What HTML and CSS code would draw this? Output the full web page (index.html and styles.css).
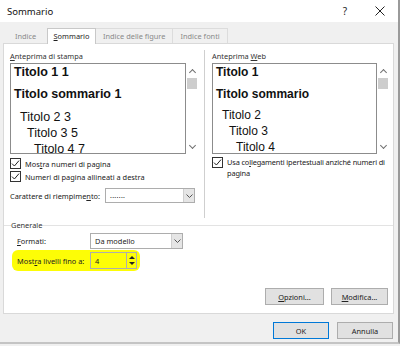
FILE: index.html
```html
<!DOCTYPE html>
<html lang="it">
<head>
    <meta charset="UTF-8">
    <title>Sommario</title>
    <link rel="stylesheet" href="styles.css">
</head>
<body>
    <div class="window">
        <div class="titlebar">
            <span class="title">Sommario</span>
            <span class="help">?</span>
            <span class="close">
                <svg width="10" height="10" viewBox="0 0 10 10"><path d="M0.5 0.5L9.5 9.5M9.5 0.5L0.5 9.5" stroke="#222" stroke-width="1"/></svg>
            </span>
        </div>

        <div class="tabs">
            <div class="tab">Indice</div>
            <div class="tab active"><u>S</u>ommario</div>
            <div class="tab">Indice delle figure</div>
            <div class="tab">Indice fonti</div>
        </div>

        <div class="panel">
            <div class="top">
                <div class="col col-left">
                    <div class="label"><u>A</u>nteprima di stampa</div>
                    <div class="preview">
                        <div class="list list-print">
                            <div class="h1">Titolo 1 1</div>
                            <div class="h1 gap">Titolo sommario 1</div>
                            <div class="h2">Titolo 2 3</div>
                            <div class="h3">Titolo 3 5</div>
                            <div class="h4">Titolo 4 7</div>
                        </div>
                        <div class="scrollbar">
                            <span class="arrow up"></span>
                            <span class="thumb"></span>
                            <span class="arrow down"></span>
                        </div>
                    </div>
                    <label class="check">
                        <span class="box"><svg width="9" height="9" viewBox="0 0 9 9"><path d="M1 4.6L3.4 7L8 1.6" fill="none" stroke="#222" stroke-width="1"/></svg></span>
                        <span>Mos<u>t</u>ra numeri di pagina</span>
                    </label>
                    <label class="check">
                        <span class="box"><svg width="9" height="9" viewBox="0 0 9 9"><path d="M1 4.6L3.4 7L8 1.6" fill="none" stroke="#222" stroke-width="1"/></svg></span>
                        <span>Numeri di pa<u>g</u>ina allineati a destra</span>
                    </label>
                    <div class="field-row fill-row">
                        <span class="field-label">Carattere di riempime<u>n</u>to:</span>
                        <div class="select select-fill">
                            <span class="value">.......</span>
                            <span class="drop"><svg width="7" height="4" viewBox="0 0 7 4"><path d="M0.5 0.5L3.5 3.5L6.5 0.5" fill="none" stroke="#555" stroke-width="1"/></svg></span>
                        </div>
                    </div>
                </div>

                <div class="vsep"></div>

                <div class="col col-right">
                    <div class="label">Anteprima <u>W</u>eb</div>
                    <div class="preview">
                        <div class="list list-web">
                            <div class="h1">Titolo 1</div>
                            <div class="h1 gap">Titolo sommario</div>
                            <div class="h2">Titolo 2</div>
                            <div class="h3">Titolo 3</div>
                            <div class="h4">Titolo 4</div>
                        </div>
                        <div class="scrollbar">
                            <span class="arrow up"></span>
                            <span class="thumb"></span>
                            <span class="arrow down"></span>
                        </div>
                    </div>
                    <label class="check check-wrap">
                        <span class="box"><svg width="9" height="9" viewBox="0 0 9 9"><path d="M1 4.6L3.4 7L8 1.6" fill="none" stroke="#222" stroke-width="1"/></svg></span>
                        <span>Usa co<u>l</u>legamenti ipertestuali anziché numeri di<br>pagina</span>
                    </label>
                </div>
            </div>

            <div class="group-title">
                <span>Generale</span>
                <span class="group-line"></span>
            </div>

            <div class="general">
                <div class="field-row">
                    <span class="field-label short"><u>F</u>ormati:</span>
                    <div class="select select-format">
                        <span class="value">Da modello</span>
                        <span class="drop"><svg width="7" height="4" viewBox="0 0 7 4"><path d="M0.5 0.5L3.5 3.5L6.5 0.5" fill="none" stroke="#555" stroke-width="1"/></svg></span>
                    </div>
                </div>
                <div class="highlight">
                    <span class="field-label short">Most<u>r</u>a livelli fino a:</span>
                    <div class="spin">
                        <span class="value">4</span>
                        <span class="spin-btns">
                            <span class="tri tri-up"></span>
                            <span class="tri tri-down"></span>
                        </span>
                    </div>
                </div>
            </div>

            <div class="panel-buttons">
                <button class="btn btn-opt"><u>O</u>pzioni...</button>
                <button class="btn btn-mod"><u>M</u>odifica...</button>
            </div>
        </div>

        <div class="footer">
            <button class="btn btn-ok">OK</button>
            <button class="btn btn-cancel">Annulla</button>
        </div>
    </div>
</body>
</html>
```

FILE: styles.css
```css
* {
    margin: 0;
    padding: 0;
    box-sizing: border-box;
}

body {
    width: 400px;
    height: 346px;
    overflow: hidden;
    background: #f0f0f0;
    font-family: "Noto Sans", "Liberation Sans", sans-serif;
    font-size: 7.4px;
    color: #1e1e1e;
}

u {
    text-decoration: underline;
    text-underline-offset: 1px;
}

.window {
    width: 400px;
    height: 344px;
    border-right: 2px solid #9a9a9a;
    border-bottom: 2px solid #c4c4c4;
}

/* title bar */
.titlebar {
    height: 22px;
    background: #fff;
    display: flex;
    align-items: center;
    padding-left: 7px;
}

.title {
    font-size: 9.5px;
    flex: 1;
    color: #111;
}

.help {
    width: 14px;
    text-align: center;
    font-size: 10px;
    margin-right: 21px;
}

.close {
    width: 14px;
    margin-right: 11px;
    display: flex;
    justify-content: center;
}

/* tabs */
.tabs {
    display: flex;
    align-items: flex-end;
    height: 21px;
    padding-left: 4px;
}

.tab {
    height: 15px;
    line-height: 14px;
    padding: 0 7px;
    color: #8a8a8a;
    border: 1px solid #dcdcdc;
    border-bottom: none;
    margin-right: -1px;
    background: #f0f0f0;
    white-space: nowrap;
}

.tab:first-child {
    width: 44px;
    border-left: none;
    border-top-color: transparent;
    text-align: center;
}

.tab.active {
    height: 16px;
    color: #1e1e1e;
    background: #fff;
    border-color: #c8c8c8;
    position: relative;
    margin-bottom: -1px;
    z-index: 1;
    width: 49px;
    text-align: center;
    padding: 0;
}

/* main panel */
.panel {
    margin-left: 3px;
    width: 391px;
    height: 271px;
    background: #fff;
    border: 1px solid #d9d9d9;
}

.top {
    display: flex;
    padding: 6px 0 0 6px;
    height: 182px;
    border-bottom: 1px solid #e3e3e3;
}

.col-left {
    width: 188px;
}

.col-right {
    width: 177px;
}

.vsep {
    width: 1px;
    height: 168px;
    background: #cfcfcf;
    margin: 0 7px 0 6px;
}

.label {
    height: 12px;
    line-height: 12px;
    color: #333;
}

.preview {
    display: flex;
    height: 91px;
    margin-top: 1px;
}

.list {
    flex: 1;
    border: 1px solid #8c8c8c;
    overflow: hidden;
    font-family: "Liberation Sans", Arial, sans-serif;
    color: #111;
    padding-left: 3px;
}

.list .h1 {
    font-weight: bold;
    line-height: 16px;
}

.list .gap {
    margin-top: 6px;
}

.list .h2 {
    padding-left: 6px;
    line-height: 16px;
}

.list .h3 {
    padding-left: 13px;
    line-height: 16px;
}

.list .h4 {
    padding-left: 20px;
    line-height: 16px;
}

.list-print {
    font-size: 12.5px;
}

.list-print .h2 {
    margin-top: 7px;
}

.list-web {
    font-size: 12px;
}

.list-web .h2 {
    margin-top: 5px;
}

.scrollbar {
    width: 12px;
    display: flex;
    flex-direction: column;
    align-items: center;
    padding-top: 5px;
}

.arrow {
    width: 5px;
    height: 5px;
    border-left: 1px solid #707070;
    border-top: 1px solid #707070;
}

.arrow.up {
    transform: rotate(45deg);
    margin-top: 2px;
}

.arrow.down {
    transform: rotate(225deg);
    margin-top: auto;
    margin-bottom: 6px;
}

.thumb {
    width: 10px;
    height: 11px;
    background: #cdcdcd;
    margin-top: 3px;
}

/* checkboxes */
.check {
    display: flex;
    align-items: center;
    gap: 4px;
    height: 13px;
    margin-top: 3px;
    color: #222;
    white-space: nowrap;
}

.check + .check {
    margin-top: 0;
}

.box {
    width: 11px;
    height: 11px;
    border: 1px solid #333;
    display: flex;
    align-items: center;
    justify-content: center;
    background: #fff;
    flex-shrink: 0;
}

.check-wrap {
    align-items: flex-start;
    height: auto;
    line-height: 11px;
    margin-top: 3px;
    letter-spacing: -0.15px;
}

/* fields */
.field-row {
    display: flex;
    align-items: center;
    height: 17px;
}

.fill-row {
    margin-top: 4px;
}

.field-label {
    width: 95px;
    color: #222;
    white-space: nowrap;
}

.field-label.short {
    width: 73px;
}

.select {
    display: flex;
    align-items: center;
    height: 15px;
    border: 1px solid #adadad;
    background: #fff;
}

.select .value {
    flex: 1;
    padding-left: 4px;
}

.select-fill {
    width: 90px;
}

.select-fill .value {
    font-size: 7px;
    letter-spacing: 0.3px;
    line-height: 8px;
}

.select-format {
    width: 93px;
    height: 16px;
}

.drop {
    width: 11px;
    height: 100%;
    display: flex;
    align-items: center;
    justify-content: center;
    background: #e5e5e5;
    border-left: 1px solid #cfcfcf;
}

/* generale */
.group-title {
    display: flex;
    align-items: center;
    gap: 5px;
    height: 10px;
    margin-top: -6px;
    padding: 0 3px 0 7px;
    color: #333;
}

.group-title span:first-child {
    background: #fff;
}

.group-line {
    flex: 1;
    height: 1px;
    background: #e3e3e3;
}

.general {
    padding: 2px 0 0 13px;
}

.highlight {
    display: flex;
    align-items: center;
    width: 128px;
    height: 21px;
    margin: 1px 0 0 -5px;
    padding-left: 5px;
    background: #fdfd06;
    border-radius: 6px;
}

.spin {
    display: flex;
    align-items: center;
    width: 47px;
    height: 17px;
    border: 1px solid #adadad;
    background: #fdfd06;
}

.spin .value {
    flex: 1;
    padding-left: 4px;
}

.spin-btns {
    width: 10px;
    height: 100%;
    display: flex;
    flex-direction: column;
    align-items: center;
    justify-content: space-around;
    border-left: 1px solid #adadad;
    padding: 1px 0;
}

.tri {
    width: 0;
    height: 0;
    border-left: 3px solid transparent;
    border-right: 3px solid transparent;
}

.tri-up {
    border-bottom: 3px solid #222;
}

.tri-down {
    border-top: 3px solid #222;
}

/* buttons */
.btn {
    font-family: "Noto Sans", "Liberation Sans", sans-serif;
    font-size: 7.4px;
    color: #222;
    height: 17px;
    background: #e1e1e1;
    border: 1px solid #adadad;
}

.panel-buttons {
    display: flex;
    justify-content: flex-end;
    gap: 7px;
    padding-right: 5px;
    margin-top: 17px;
}

.btn-opt {
    width: 59px;
}

.btn-mod {
    width: 57px;
}

.footer {
    display: flex;
    justify-content: flex-end;
    gap: 8px;
    padding: 8px 5px 0 0;
}

.btn-ok {
    width: 56px;
    border-color: #0078d7;
}

.btn-cancel {
    width: 56px;
}
```
